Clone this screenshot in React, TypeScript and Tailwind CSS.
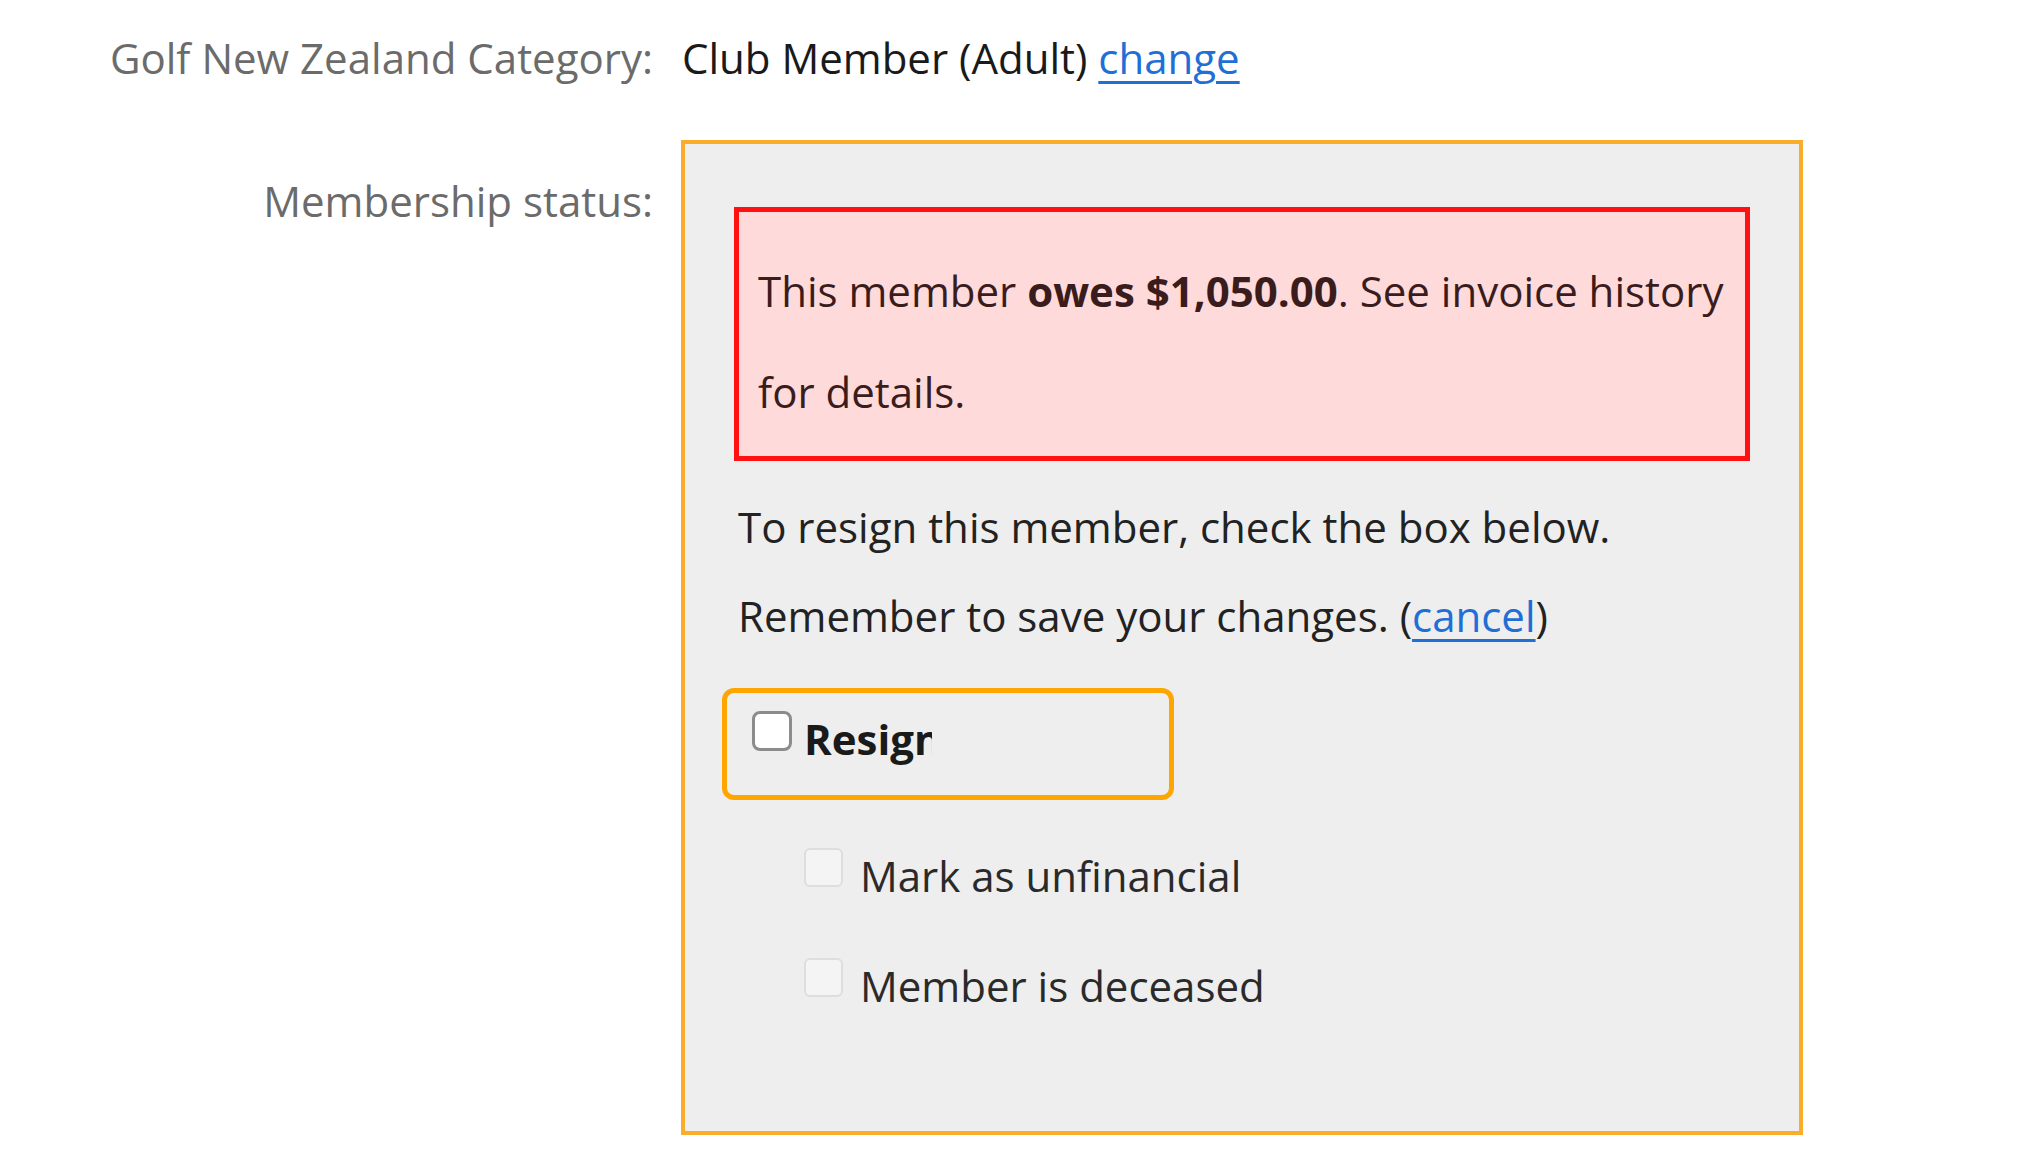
export default function App() {
  return (
    <div className="min-h-screen bg-white font-['Open_Sans',_'Liberation_Sans',_sans-serif] text-[42px] leading-[56px] text-[#222]">
      {/* Category row */}
      <div className="flex pt-[30px]">
        <div className="w-[653px] shrink-0 text-right text-[#6b6b6b]">Golf New Zealand Category:</div>
        <div className="ml-[29px] text-[#1a1a1a]">
          Club Member (Adult){" "}
          <a href="#" className="text-[#1f6fd6] underline decoration-[3px] underline-offset-[7px]">
            change
          </a>
        </div>
      </div>

      {/* Membership status row */}
      <div className="mt-[54px] flex">
        <div className="w-[653px] shrink-0 pt-[33px] text-right text-[#6b6b6b]">Membership status:</div>
        <div className="ml-[28px] w-[1122px] border-4 border-[#f9ad2a] bg-[#eeeeee] px-[49px] pt-[63px] pb-[117px]">
          {/* Owing alert */}
          <div className="border-[5px] border-[#ff1111] bg-[#ffdadb] pl-[19px] pt-[28px] pb-[14px] leading-[101px] text-[#3a1c1c]">
            This member <span className="font-bold">owes $1,050.00</span>. See invoice history
            <br />
            for details.
          </div>

          <div className="mt-[21px] pl-[4px] leading-[89px]">
            <div>To resign this member, check the box below.</div>
            <div>
              Remember to save your changes. (
              <a href="#" className="text-[#1f6fd6] underline decoration-[3px] underline-offset-[7px]">
                cancel
              </a>
              )
            </div>
          </div>

          {/* Resign option */}
          <div className="ml-[-12px] mt-[28px] h-[112px] w-[452px] rounded-[12px] border-[5px] border-[#ffa500] pl-[25px] pt-[18px]">
            <label className="flex items-start">
              <span className="h-[40px] w-[40px] shrink-0 rounded-[8px] border-[3px] border-[#8c8c8c] bg-white" />
              <span className="ml-[12px] w-[128px] overflow-hidden whitespace-nowrap font-bold text-[#1a1a1a]">Resign</span>
            </label>
          </div>

          {/* Disabled sub-options */}
          <div className="mt-[48px] flex flex-col gap-[54px] pl-[70px]">
            {["Mark as unfinancial", "Member is deceased"].map((label) => (
              <label key={label} className="flex items-start">
                <span className="h-[39px] w-[39px] shrink-0 rounded-[6px] border-2 border-[#dedede] bg-[#f4f4f4]" />
                <span className="ml-[17px] text-[#2a2a2a]">{label}</span>
              </label>
            ))}
          </div>
        </div>
      </div>
    </div>
  );
}
